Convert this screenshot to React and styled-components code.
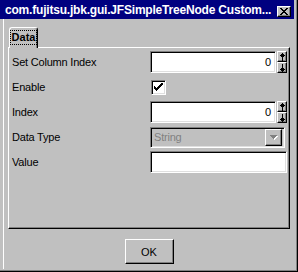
import React from "react";
import styled, { createGlobalStyle } from "styled-components";

const Global = createGlobalStyle`
  html, body { margin: 0; padding: 0; background: #c0c0c0; }
  body { font-family: "Liberation Sans", Arial, sans-serif; }
`;

const Window = styled.div`
  width: 298px;
  height: 272px;
  box-sizing: border-box;
  background: #c0c0c0;
  box-shadow: inset -1px -1px #000, inset -2px -2px #808080;
  display: flex;
  flex-direction: column;
  font-family: "Liberation Sans", Arial, sans-serif;
  overflow: hidden;
`;

const TitleBar = styled.div`
  width: 294px;
  height: 19px;
  box-sizing: border-box;
  background: #000080;
  color: #fff;
  display: flex;
  align-items: flex-end;
  padding: 0 3px 2px 5px;
  flex-shrink: 0;
`;

const TitleText = styled.div`
  font-size: 12px;
  font-weight: bold;
  line-height: 13px;
  letter-spacing: -0.2px;
  white-space: nowrap;
  overflow: hidden;
  flex: 1;
`;

const CloseButton = styled.div`
  width: 14px;
  height: 11px;
  box-sizing: border-box;
  background: #c0c0c0;
  border: 1px solid;
  border-color: #fff #000 #000 #fff;
  box-shadow: inset -1px -1px #808080;
  display: flex;
  align-items: center;
  justify-content: center;
  flex-shrink: 0;
  margin-left: 4px;
`;

const Body = styled.div`
  flex: 1;
  margin-left: 3px;
  margin-right: 4px;
  margin-bottom: 3px;
  border-left: 1px solid #fff;
  padding: 8px 4px 0 4px;
  display: flex;
  flex-direction: column;
`;

const TabStrip = styled.div`
  height: 20px;
  display: flex;
  align-items: flex-end;
  padding-left: 1px;
`;

const Tab = styled.div`
  position: relative;
  z-index: 1;
  width: 29px;
  height: 21px;
  margin-bottom: -1px;
  box-sizing: border-box;
  background: #c0c0c0;
  border-top: 1px solid #fff;
  border-left: 1px solid #fff;
  border-right: 1px solid #000;
  box-shadow: inset -1px 0 #808080;
  border-radius: 3px 3px 0 0;
  display: flex;
  justify-content: center;
  padding-top: 3px;
`;

const TabLabel = styled.span`
  font-size: 11px;
  font-weight: bold;
  line-height: 13px;
  height: 13px;
  padding: 0 1px;
  outline: 1px dotted #000;
  color: #000;
`;

const Panel = styled.div`
  height: 182px;
  box-sizing: border-box;
  border: 1px solid;
  border-color: #fff #000 #000 #fff;
  box-shadow: inset -1px -1px #808080;
  padding: 3px 2px 0 3px;
  display: grid;
  grid-template-columns: 138px 1fr;
  grid-auto-rows: 22px;
  row-gap: 3px;
  align-items: center;
  align-content: start;
`;

const Label = styled.div`
  font-size: 11px;
  letter-spacing: -0.2px;
  color: #000;
  line-height: 13px;
`;

const sunken = `
  box-sizing: border-box;
  border: 1px solid;
  border-color: #808080 #fff #fff #808080;
  box-shadow: inset 1px 1px #000, inset -1px -1px #dfdfdf;
`;

const raised = `
  box-sizing: border-box;
  background: #c0c0c0;
  border: 1px solid;
  border-color: #fff #000 #000 #fff;
  box-shadow: inset -1px -1px #808080;
`;

const Spin = styled.div`
  display: flex;
  gap: 1px;
  height: 22px;
`;

const SpinField = styled.div`
  ${sunken}
  width: 126px;
  height: 22px;
  background: #fff;
  font-size: 11px;
  text-align: right;
  padding-right: 4px;
  line-height: 20px;
  color: #000;
`;

const SpinButtons = styled.div`
  display: flex;
  flex-direction: column;
  width: 10px;
`;

const SpinButton = styled.div`
  ${raised}
  height: 11px;
  display: flex;
  align-items: center;
  justify-content: center;
`;

const CheckBox = styled.div`
  ${sunken}
  width: 15px;
  height: 15px;
  margin-left: 1px;
  background: #fff;
  display: flex;
  align-items: center;
  justify-content: center;
`;

const Combo = styled.div`
  ${sunken}
  width: 135px;
  height: 21px;
  background: #c0c0c0;
  display: flex;
  align-items: center;
  padding: 2px;
`;

const ComboText = styled.div`
  flex: 1;
  font-size: 11px;
  color: #808080;
  padding-left: 1px;
  letter-spacing: -0.2px;
`;

const ComboButton = styled.div`
  ${raised}
  width: 17px;
  height: 17px;
  display: flex;
  align-items: center;
  justify-content: center;
`;

const TextField = styled.div`
  ${sunken}
  width: 137px;
  height: 22px;
  background: #fff;
`;

const Footer = styled.div`
  display: flex;
  justify-content: center;
  padding-top: 10px;
`;

const Button = styled.div`
  ${raised}
  width: 49px;
  height: 25px;
  display: flex;
  align-items: center;
  justify-content: center;
  font-size: 11px;
  color: #000;
`;

const UpArrow = () => (
  <svg width="5" height="8" viewBox="0 0 5 8" shapeRendering="crispEdges">
    <polygon points="2.5,0 5,3 0,3" fill="#000" />
    <rect x="1" y="3" width="3" height="1" fill="#000" />
    <rect x="2" y="3" width="1" height="5" fill="#000" />
  </svg>
);

const DownArrow = () => (
  <svg width="5" height="8" viewBox="0 0 5 8" shapeRendering="crispEdges">
    <rect x="2" y="0" width="1" height="5" fill="#000" />
    <rect x="1" y="4" width="3" height="1" fill="#000" />
    <polygon points="0,5 5,5 2.5,8" fill="#000" />
  </svg>
);

const SpinBox = ({ value }) => (
  <Spin>
    <SpinField>{value}</SpinField>
    <SpinButtons>
      <SpinButton><UpArrow /></SpinButton>
      <SpinButton><DownArrow /></SpinButton>
    </SpinButtons>
  </Spin>
);

export default function App() {
  return (
    <>
      <Global />
      <Window>
        <TitleBar>
          <TitleText>com.fujitsu.jbk.gui.JFSimpleTreeNode Custom...</TitleText>
          <CloseButton>
            <svg width="8" height="7" viewBox="0 0 8 7" shapeRendering="crispEdges">
              <path d="M0 0h2v1h1v1h2V1h1V0h2v1H7v1H6v1H5v1h1v1h1v1h1v1H6V6H5V5H3v1H2v1H0V6h1V5h1V4h1V3H2V2H1V1H0z" fill="#000" />
            </svg>
          </CloseButton>
        </TitleBar>
        <Body>
          <TabStrip>
            <Tab><TabLabel>Data</TabLabel></Tab>
          </TabStrip>
          <Panel>
            <Label>Set Column Index</Label>
            <SpinBox value="0" />
            <Label>Enable</Label>
            <CheckBox>
              <svg width="9" height="8" viewBox="0 0 9 8" shapeRendering="crispEdges">
                <path d="M7 0h2v2H8v1H7v1H6v1H5v1H4v1H3v1H2V7H1V6H0V3h1v1h1v1h1V4h1V3h1V2h1V1h1z" fill="#000" />
              </svg>
            </CheckBox>
            <Label>Index</Label>
            <SpinBox value="0" />
            <Label>Data Type</Label>
            <Combo>
              <ComboText>String</ComboText>
              <ComboButton>
                <svg width="8" height="5" viewBox="0 0 8 5" shapeRendering="crispEdges">
                  <polygon points="1,1 8,1 4.5,5" fill="#fff" />
                  <polygon points="0,0 7,0 3.5,4" fill="#808080" />
                </svg>
              </ComboButton>
            </Combo>
            <Label>Value</Label>
            <TextField />
          </Panel>
          <Footer>
            <Button>OK</Button>
          </Footer>
        </Body>
      </Window>
    </>
  );
}
